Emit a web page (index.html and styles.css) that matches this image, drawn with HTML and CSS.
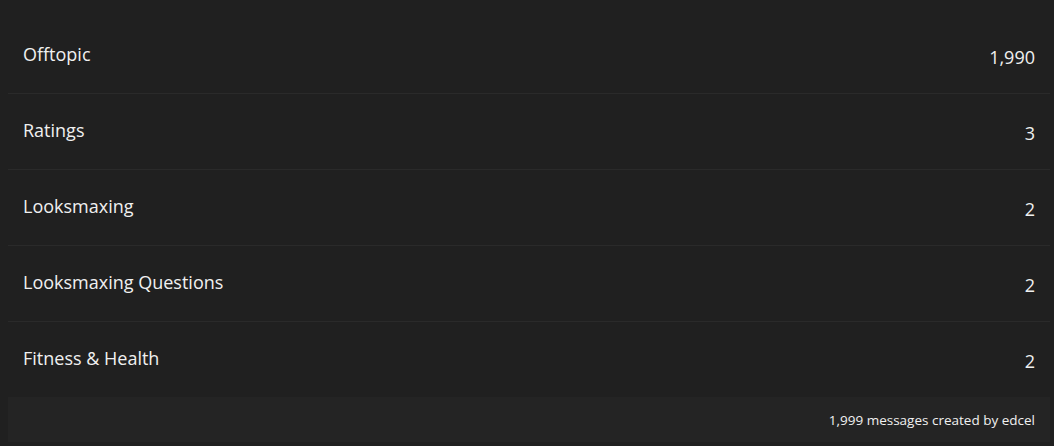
FILE: index.html
```html
<!DOCTYPE html>
<html lang="en">

<head>
    <meta charset="UTF-8" />
    <meta name="viewport" content="width=device-width, initial-scale=1.0" />
    <title>Forum Activity</title>
    <link rel="stylesheet" href="styles.css">
</head>

<body>
    <div class="activity">
        <ul class="forum-list">
            <li class="forum-row">
                <span class="forum-name">Offtopic</span>
                <span class="forum-count">1,990</span>
            </li>
            <li class="forum-row">
                <span class="forum-name">Ratings</span>
                <span class="forum-count">3</span>
            </li>
            <li class="forum-row">
                <span class="forum-name">Looksmaxing</span>
                <span class="forum-count">2</span>
            </li>
            <li class="forum-row">
                <span class="forum-name">Looksmaxing Questions</span>
                <span class="forum-count">2</span>
            </li>
            <li class="forum-row">
                <span class="forum-name">Fitness &amp; Health</span>
                <span class="forum-count">2</span>
            </li>
        </ul>
        <div class="activity-footer">1,999 messages created by edcel</div>
    </div>
</body>

</html>
```

FILE: styles.css
```css
body {
    margin: 0;
    background-color: #202020;
    color: #f0f0f0;
    font-family: "Open Sans", "Noto Sans", sans-serif;
}

.activity {
    margin: 18px 4px 4px 8px;
}

.forum-list {
    list-style: none;
    margin: 0;
    padding: 0;
}

.forum-row {
    display: flex;
    align-items: center;
    justify-content: space-between;
    height: 75px;
    padding: 0 15px;
    border-bottom: 1px solid #2a2a2a;
    font-size: 18px;
}

.forum-row:last-child {
    border-bottom: none;
}

.forum-name {
    margin-top: -3px;
}

.forum-count {
    margin-top: 2px;
}

.activity-footer {
    display: flex;
    align-items: center;
    justify-content: flex-end;
    height: 45px;
    padding: 0 15px;
    background-color: #242424;
    font-size: 13.5px;
}
```
